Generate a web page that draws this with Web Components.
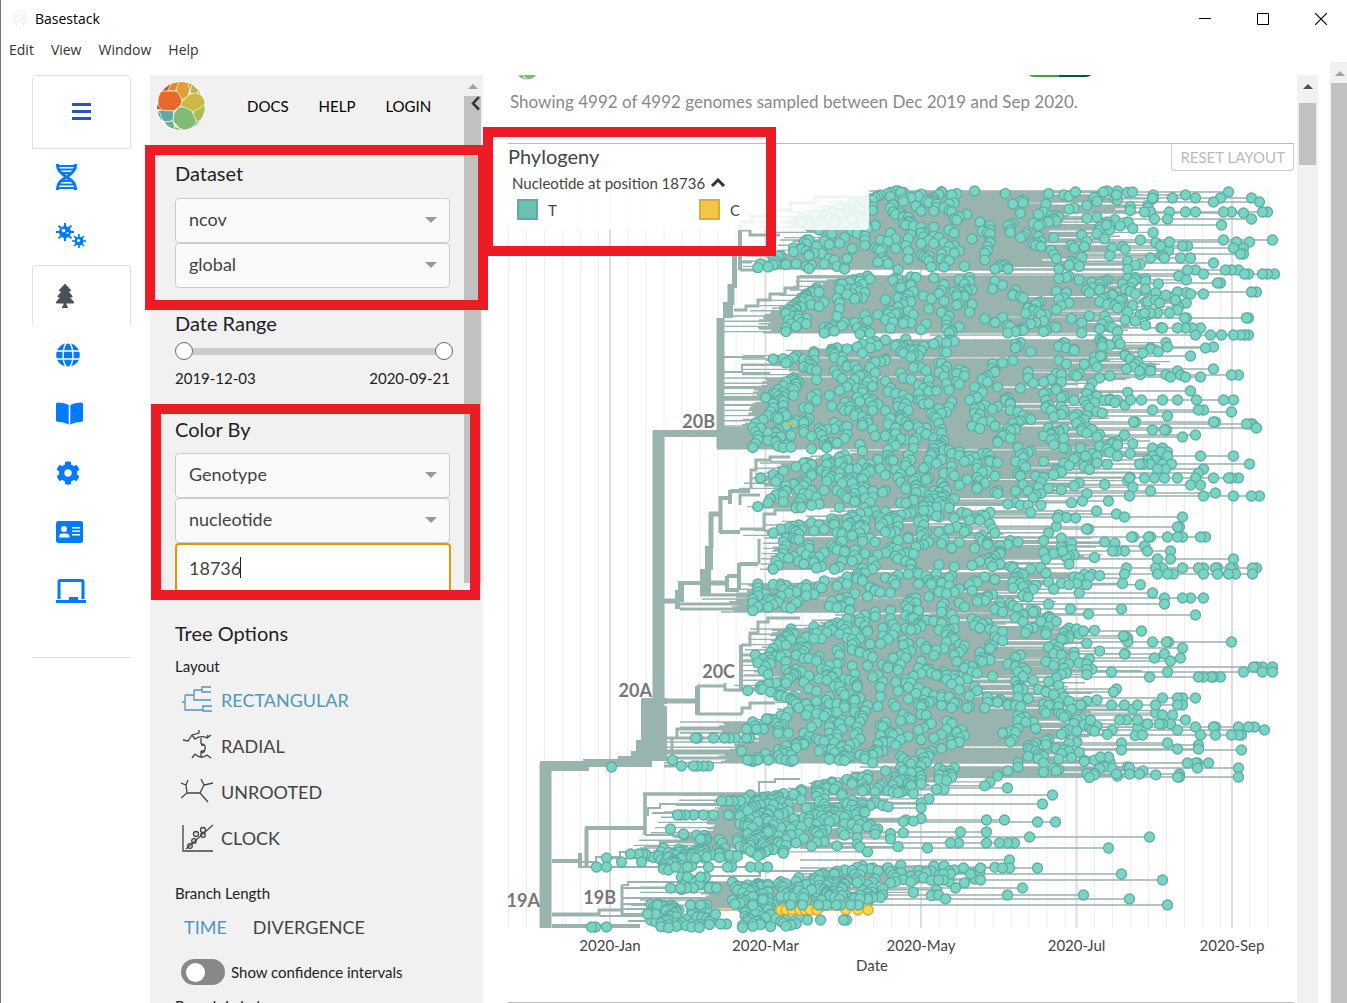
<!DOCTYPE html>
<html lang="en">
<head>
<meta charset="utf-8">
<title>Basestack</title>
<style>
html,body{margin:0;height:100%;overflow:hidden;background:#fff;font-family:Lato,"Liberation Sans",sans-serif;color:#333}
</style>
</head>
<body>
<basestack-app></basestack-app>
<script>
const define = (name, html, setup) => {
  const tpl = document.createElement('template');
  tpl.innerHTML = '<style>*{box-sizing:border-box}button,input,select{font:inherit;color:inherit;margin:0}button{background:none;border:0;padding:0;text-align:left}</style>' + html;
  customElements.define(name, class extends HTMLElement {
    constructor() {
      super();
      this.attachShadow({mode: 'open'}).append(tpl.content.cloneNode(true));
    }
    connectedCallback() { if (setup) setup(this, this.shadowRoot); }
  });
};

/* Window chrome */
define('window-bar', `
<style>
:host{display:flex;align-items:center;height:37px;padding:0 14px 0 11px;font:14px "Open Sans","Noto Sans",sans-serif;color:#000}
svg{display:block}
.name{flex:1;padding-left:7px}
button{width:24px;height:24px;display:grid;place-items:center}
.controls{display:flex;gap:34px}
</style>
<svg width="16" height="18" viewBox="0 0 16 18" fill="none" stroke="#d4d4d4" stroke-dasharray="1 2"><circle cx="8" cy="7" r="6"/><circle cx="8" cy="7" r="3"/><path d="M3 12l2 4M13 12l-2 4M7 17h3"/></svg>
<span class="name">Basestack</span>
<div class="controls">
<button aria-label="Minimize"><svg width="12" height="12"><path d="M0 5.500h12" stroke="#000"/></svg></button>
<button aria-label="Maximize"><svg width="12" height="12"><path d="M.5.500h11v11H.5z" fill="none" stroke="#000"/></svg></button>
<button aria-label="Close"><svg width="12" height="12"><path d="M0 0l12 12M12 0L0 12" stroke="#000" stroke-width="1.200"/></svg></button>
</div>`);

define('menu-bar', `
<style>
:host{display:flex;align-items:center;gap:17px;height:25px;padding:0 8px;font:14px "Open Sans","Noto Sans",sans-serif;color:#333}
</style>
<button>Edit</button><button>View</button><button>Window</button><button>Help</button>`);

/* Left rail */
define('nav-rail', `
<style>
:host{display:block;width:99px}
nav{display:flex;flex-direction:column;height:583px;border-bottom:1px solid #dee2e6}
a{display:flex;align-items:center;height:59px;padding-left:24px;color:#007bff}
a.menu{height:74px;justify-content:center;padding:0;border:1px solid #dee2e6;border-radius:4px 4px 0 0;color:#2b55bd}
a.on{height:60px;padding-left:23px;border:1px solid #dee2e6;border-bottom:0;border-radius:4px 4px 0 0;color:#495057}
svg{display:block;fill:currentColor}
</style>
<nav aria-label="Sections">
<a class="menu" href="#" aria-label="Menu"><svg width="19" height="18" viewBox="0 0 19 18"><path d="M0 0h19v3H0zM0 7h19v3H0zM0 14h19v3H0z"/></svg></a>
<a href="#" aria-label="Sequences" style="margin-top:-2px"><svg width="21" height="26" viewBox="0 0 21 26" fill="none" stroke="currentColor" style="fill:none"><path d="M1.500 0v1.500c0 5 3.500 8 9 11.500s9 6 9 11.500V26M19.500 0v1.500c0 5-3.500 8-9 11.500s-9 6-9 11.500V26" stroke-width="3"/><path d="M2 2h17M2 5.500h17M5 9h11M5 17h11M2 20.500h17M2 24h17" stroke-width="2"/></svg></a>
<a href="#" aria-label="Variants"><svg width="30" height="25" viewBox="0 0 30 25"><g stroke="currentColor"><circle cx="9" cy="9" r="5.500"/><path d="M9 0v18M0 9h18M2.600 2.600l12.800 12.800M15.400 2.600L2.600 15.400" stroke-width="2"/><circle cx="23" cy="18" r="4"/><path d="M23 11v14M16 18h14M18 13l10 10M28 13L18 23" stroke-width="1.600"/></g><g fill="#fff"><circle cx="7.500" cy="7.500" r="1.800"/><circle cx="11.500" cy="10" r="1"/><circle cx="22.500" cy="17.500" r="1.500"/></g></svg></a>
<a class="on" href="#" aria-label="Tree" aria-current="page"><svg width="18" height="24" viewBox="0 0 384 512"><path d="M378.310 378.490L298.420 288h30.630c9.010 0 16.980-5 20.780-13.060 3.800-8.040 2.550-17.260-3.280-24.050L268.420 160h28.890c9.100 0 17.300-5.350 20.860-13.610 3.520-8.130 1.860-17.590-4.240-24.080L203.660 4.830c-6.030-6.450-17.280-6.450-23.320 0L70.060 122.310c-6.100 6.490-7.750 15.950-4.240 24.080C69.380 154.650 77.590 160 86.690 160h28.890l-78.140 90.910c-5.810 6.780-7.060 15.990-3.270 24.040C37.970 283 45.930 288 54.950 288h30.630L5.690 378.490c-6 6.790-7.360 16.090-3.560 24.260 3.750 8.050 12 13.250 21.010 13.250H160v24.450l-30.290 48.400c-5.320 10.640 2.420 23.160 14.310 23.160h95.960c11.890 0 19.630-12.520 14.310-23.160L224 440.450V416h136.860c9.010 0 17.260-5.200 21.010-13.250 3.800-8.170 2.440-17.470-3.560-24.260z"/></svg></a>
<a href="#" aria-label="Map"><svg width="24" height="24" viewBox="0 0 24 24"><circle cx="12" cy="12" r="11.800"/><g fill="none" stroke="#fff" stroke-width="1.400"><ellipse cx="12" cy="12" rx="5" ry="12.500"/><path d="M0 8h24M0 16h24"/></g></svg></a>
<a href="#" aria-label="Docs"><svg width="27" height="23" viewBox="0 0 27 23"><path d="M0 2Q0 .5 1.500.500 8.500.500 12.700 3v19.500Q8 20 1.300 19.700 0 19.700 0 18.300zM27 2Q27 .5 25.500.500 18.500.500 14.300 3v19.500Q19 20 25.700 19.700 27 19.700 27 18.300z"/></svg></a>
<a href="#" aria-label="Settings"><svg width="24" height="24" viewBox="0 0 512 512"><path d="M487.400 315.700l-42.600-24.600c4.300-23.200 4.300-47 0-70.200l42.600-24.600c4.900-2.800 7.100-8.600 5.500-14-11.100-35.600-30-67.800-54.700-94.600-3.800-4.100-10-5.100-14.800-2.300L380.800 110c-17.900-15.400-38.500-27.300-60.800-35.100V25.800c0-5.600-3.900-10.500-9.400-11.700-36.700-8.200-74.300-7.800-109.200 0-5.500 1.200-9.400 6.100-9.400 11.700V75c-22.200 7.900-42.800 19.800-60.800 35.100L88.700 85.500c-4.900-2.800-11-1.900-14.800 2.300-24.700 26.700-43.600 58.900-54.700 94.600-1.700 5.400.6 11.200 5.500 14L67.300 221c-4.300 23.200-4.300 47 0 70.200l-42.600 24.600c-4.900 2.800-7.100 8.600-5.500 14 11.100 35.600 30 67.800 54.700 94.600 3.800 4.100 10 5.100 14.800 2.300l42.600-24.600c17.900 15.400 38.500 27.300 60.800 35.100v49.200c0 5.600 3.900 10.500 9.400 11.700 36.700 8.200 74.300 7.800 109.200 0 5.500-1.200 9.400-6.100 9.400-11.700v-49.200c22.200-7.900 42.800-19.800 60.800-35.100l42.600 24.600c4.900 2.800 11 1.900 14.800-2.300 24.700-26.700 43.600-58.900 54.700-94.600 1.500-5.500-.7-11.300-5.600-14.100zM256 336c-44.100 0-80-35.900-80-80s35.900-80 80-80 80 35.900 80 80-35.900 80-80 80z"/></svg></a>
<a href="#" aria-label="Account"><svg width="27" height="22" viewBox="0 0 27 22"><rect width="27" height="22" rx="2.500"/><g fill="#fff"><circle cx="8" cy="8" r="3"/><path d="M3 16.500q0-4 3-4h4.500q3 0 3 4zM16 6h8v1.500h-8zM16 9.500h8v1.500h-8zM16 13h8v1.500h-8z"/></g></svg></a>
<a href="#" aria-label="Workspace"><svg width="30" height="24" viewBox="0 0 30 24"><path d="M1.500 20V2.500Q1.500 0 4 0h22q2.500 0 2.500 2.500V20h-3V3h-21v17zM0 21h13v-3h9v3h8v3H0z"/></svg></a>
</nav>`);

/* Cell-like round brand mark */
define('brand-mark', `
<style>:host{display:block;width:50px;height:50px}svg{display:block;width:100%;height:100%}</style>
<svg viewBox="0 0 50 50"><defs><clipPath id="c"><circle cx="25" cy="25" r="24"/></clipPath></defs>
<circle cx="25" cy="25" r="25" fill="#fff"/>
<g clip-path="url(#c)" stroke="#f6f3e2" stroke-width=".8">
<path fill="#dd4826" d="M0 10L8 3 18 0 14 9 6 12 0 18z"/><path fill="#e68532" d="M12 9L17 0 24 0 21 8 18 11z"/><path fill="#e39e35" d="M24-1h7l3 8-2 8-6 4-5-8-1-3z"/>
<path fill="#e9692c" d="M2 14q1-4 5-4h11q4 0 5 3l3 6-1 5-7 6H6q-4 0-4-5z"/><path fill="#dca238" d="M31-1l7 4v7l-3 3z"/><path fill="#b4bb48" d="M36 3l8 7-1 5-9-3z"/><path fill="#98c15c" d="M42 9l8 12-3 2-6-9z"/>
<path fill="#cdb941" d="M26 20l7-6q6-4 12 0l4 6-1 6-10 5-9-2-4-4z"/><path fill="#a8c052" d="M38 30l11-6 1 10-8 8-6-7z"/>
<path fill="#60a9a0" d="M2 30l4-1 12 1-1 10-8 1-6-5z"/><path fill="#db3527" d="M0 22l5 6-5 1z"/><path fill="#4f95b5" d="M0 29l4 3 3 10-7-2z"/>
<path fill="#81b976" d="M18 32l5-6 5 0 8 4 5 12-3 7-6 2-9-4-6-7z"/><path fill="#6bb190" d="M8 41l9-1 2 7-5 2z"/><path fill="#98c15c" d="M16 50l3-5 8 5z"/><path fill="#65ad9a" d="M36 46l5-5 5-3-2 8-9 5z"/></g></svg>`);

/* Scrollbar picture: arrow + thumb */
define('scroll-track', `
<style>
:host{display:flex;flex-direction:column;align-items:center;background:#f1f1f1;width:21px;--arrow:#505050}
i{flex:none;width:0;height:0;border:5px solid transparent;border-top:0;border-bottom-color:var(--arrow);margin:9px 0 14px}
b{flex:none;width:17px;background:#c1c1c1;height:var(--thumb,62px)}
:host([dim]){--arrow:#a3a3a3}
:host([dim]) i{margin:9px 0 7px}
</style><i></i><b></b>`);

define('select-box', `
<style>
:host{display:block;position:relative}
select{display:block;width:100%;height:45px;padding:0 13px 4px;border:1px solid #ccc;border-radius:4px;background:#fafafa;appearance:none;font-size:18px;color:#444}
i{position:absolute;right:13px;top:19px;border:6px solid transparent;border-top-color:#999;border-bottom:0;pointer-events:none}
</style><select></select><i></i>`, (host, root) => {
  const s = root.querySelector('select');
  s.setAttribute('aria-label', host.getAttribute('label'));
  s.innerHTML = '<option>' + host.getAttribute('value') + '</option>';
});

define('date-slider', `
<style>
:host{display:grid;height:20px;width:278px;align-items:center}
:host>*{grid-area:1/1}
i{height:7px;background:#ccc;margin:0 9px}
input{appearance:none;background:none;width:100%;height:18px;pointer-events:none}
input::-webkit-slider-thumb{appearance:none;width:18px;height:18px;border-radius:9px;background:#fff;border:1px solid #666;pointer-events:auto}
</style><i></i><input type="range" aria-label="Start date" value="0"><input type="range" aria-label="End date" value="100">`);

define('layout-option', `
<style>
:host{display:block;height:46px;color:#444}
:host([active]){color:#5097ba}
button{display:flex;align-items:center;gap:8px;width:100%;height:46px;padding-left:6px;font-size:18px}
::slotted(svg){display:block;width:32px;height:32px;fill:none;stroke:currentColor;stroke-width:1.300}
</style><button><slot></slot></button>`);

define('control-panel', `
<style>
:host{display:block;width:333px;background:#f1f1f1;color:#222;position:relative}
.upper{display:flex;height:515px;overflow:hidden}
.controls{flex:1;padding:0 14px 0 25px;overflow:hidden}
header{display:flex;align-items:center;margin-left:-19px;height:62px;font-size:15px;color:#000}
header a{color:inherit;text-decoration:none;margin-left:30px}
header brand-mark{margin-right:11px}
h2{margin:0;font-size:20px;font-weight:400;line-height:24px}
h3{margin:0;font-size:15px;font-weight:400;line-height:20px}
.dataset{padding:24px 0 23px}
.dataset h2{margin-bottom:13px}
.color h2{margin-bottom:12px}
.dates{display:flex;justify-content:space-between;font-size:15px;line-height:20px;margin-top:7px}
date-slider{margin-top:6px}
.color{padding-top:29px}
.color input{display:block;width:276px;height:50px;padding:0 12px 1px;border:2px solid #e09a00;border-radius:4px 4px 0 0;background:#fff;font-size:18px;color:#444;outline:0}
.field{position:relative}
.field i{position:absolute;left:65px;top:14px;width:1px;height:21px;background:#222}
scroll-track{width:17px;margin-right:2px;height:508px;--thumb:487px}
.collapse{position:absolute;right:3px;top:20px;width:10px;height:16px}
.collapse svg{display:block}
.lower{padding:31px 25px 0}
.lower h3{margin-top:11px}
.opts{margin:1px 0 22px}
.length{display:flex;gap:26px;padding-left:9px;margin-top:12px;font-size:18px;line-height:24px;color:#444}
.length .on{color:#5097ba}
.toggle{display:flex;align-items:center;gap:6px;margin:20px 0 6px 6px;font-size:15px}
.toggle input{appearance:none;width:44px;height:26px;border-radius:13px;background:#888}
.toggle input::before{content:"";display:block;width:19px;height:19px;border-radius:50%;background:#fff;margin:4px 5px}
</style>
<div class="upper"><div class="controls">
<header><brand-mark></brand-mark><a href="#">DOCS</a><a href="#">HELP</a><a href="#">LOGIN</a></header>
<section class="dataset"><h2>Dataset</h2><select-box label="Dataset" value="ncov"></select-box><select-box label="Region" value="global"></select-box></section>
<section><h2>Date Range</h2><date-slider></date-slider><div class="dates"><span>2019-12-03</span><span>2020-09-21</span></div></section>
<section class="color"><h2>Color By</h2><select-box label="Color by" value="Genotype"></select-box><select-box label="Sequence type" value="nucleotide"></select-box>
<div class="field"><input type="text" aria-label="Position" value="18736"><i></i></div></section>
</div><scroll-track dim></scroll-track></div>
<button class="collapse" aria-label="Collapse sidebar"><svg width="10" height="16" viewBox="0 0 10 16"><path d="M9 2L3 8.500l6 6" fill="none" stroke="#333" stroke-width="2.500"/></svg></button>
<div class="lower"><h2>Tree Options</h2><h3>Layout</h3>
<div class="opts">
<layout-option active><svg viewBox="0 0 32 32"><path d="M1 18h3M4 11v15h18M4 11h9M13 6v10h17M13 6h8M30 3h-9v5h9M31 22h-9v5h9"/></svg>RECTANGULAR</layout-option>
<layout-option><svg viewBox="0 0 32 32"><path d="M18 -1v4l-7 2-4 6-5-1M11 5l3 4q6-4 12-1l1-3M26 8l4-3M20 8v6M20 14q5 0 4 5t-4 3v5M20 15h3M20 21h3M11 28l3-4M14 24q6 6 12 1l4 3"/></svg>RADIAL</layout-option>
<layout-option><svg viewBox="0 0 32 32"><path d="M0 7l5 2M7 4L5 9l1 8-6 5M6 17h13l8 9M19 17l4-8 9-2M23 9l-3-6"/></svg>UNROOTED</layout-option>
<layout-option><svg viewBox="0 0 32 32"><path d="M2 3v26h30M5 27L32 3"/><circle cx="9" cy="24" r="2.300"/><circle cx="13" cy="19" r="2.300"/><circle cx="15" cy="12" r="2.500"/><circle cx="22" cy="13" r="2.300"/><circle cx="22" cy="8" r="2.500"/></svg>CLOCK</layout-option>
</div>
<h3>Branch Length</h3>
<div class="length"><button class="on">TIME</button><button>DIVERGENCE</button></div>
<label class="toggle"><input type="checkbox" role="switch"><span>Show confidence intervals</span></label>
<h3>Branch Labels</h3>
</div>`);

/* Phylogeny drawing */
define('phylo-tree', `
<style>
:host{display:block}
svg{display:block;width:100%;height:auto;overflow:visible;font-family:Lato,sans-serif}
.axis{font-size:15px;fill:#444;text-anchor:middle}
.clade{font-size:18px;font-weight:700;fill:#777;text-anchor:end}
</style>
<svg viewBox="508 172 786 821" role="img" aria-label="Phylogeny"></svg>`, (host, root) => {
  let seed = 7919;
  const rnd = () => (seed = (seed * 16807) % 2147483647) / 2147483647;
  const GREY = '#99b3ae';
  let grid = '', wide = '', lines = '', dots = '', top = '';
  [508.5, 526.5, 544.5, 562.5, 580.5, 598.5].forEach(x => grid += `M${x} 190V928`);
  const months = [[610, '2020-Jan'], [765.5, '2020-Mar'], [921, '2020-May'], [1076.5, '2020-Jul'], [1232, '2020-Sep']];
  let labels = '';
  months.forEach(([x, t], i) => {
    wide += `M${x} 190V928`;
    for (let k = 1; k < (i === 4 ? 3 : 9); k++) grid += `M${x + 18 * k} 190V928`;
    labels += `<text class="axis" x="${x}" y="951">${t}</text>`;
  });
  const day = x => 508 + Math.round((x - 508) / 2.55) * 2.55;
  const circle = (x, y) => `<circle cx="${x.toFixed(1)}" cy="${y.toFixed(1)}" r="5"/>`;
  const dot = (x, y) => circle(day(x), y);
  /* clade bands: y0 y1 | stem x | first tip x | solid until | furthest | random tips per row */
  const bands = [
    [191,222,868,748,892,785,1110,1160,2.4],[222,240,746,790,795,850,1110,1160,2.2],[240,256,780,775,805,780,1100,1190,2.2],[256,270,745,742,775,748,1090,1180,2.4],
    [276,290,800,790,865,805,1140,1200,2.4],[290,316,790,740,810,775,1130,1190,2.4],[316,334,724,724,785,785,1100,1190,2.4],
    [340,358,870,724,880,775,1130,1170,2.4],[359,377,742,742,765,840,1130,1190,2.5],[378,401,724,724,790,757,1090,1130,2.2],
    [400,429,724,724,775,750,1090,1130,3],[428,449,717,717,755,752,1110,1160,2.8],[451,463,850,758,860,800,1110,1170,2.6],
    [463,479,760,752,800,757,1100,1170,2.8],[478,492,750,735,757,800,1060,1170,2.8],[491,508,800,742,780,755,1030,1090,3],
    [511,525,830,766,870,800,1000,1080,2.8],[525,536,764,742,790,757,980,1090,2.8],[538,570,764,760,785,770,1040,1130,2.6],
    [573,585,850,780,860,800,1100,1150,2.6],[584,597,740,702,755,750,1040,1080,2.6],[599,612,702,682,750,752,1010,1060,3],
    [615,630,835,768,860,800,1050,1090,2.8],[629,656,750,744,785,765,1090,1140,3],[655,676,742,742,755,760,1080,1150,3],
    [675,691,744,728,790,745,1050,1100,2.8],[692,705,800,750,770,795,1050,1100,2.6],[704,723,790,742,800,760,1080,1170,2.6],
    [722,733,680,680,750,752,1090,1180,2.6],[733,743,680,672,800,805,1070,1150,2.6],[742,763,664,664,790,745,1060,1120,2.8],
    [767,778,860,840,900,850,1130,1160,2.4],[778,795,830,762,850,775,930,1000,3.200],[795,813,682,672,745,735,880,930,3.600],
    [812,835,664,650,740,740,870,930,3.200],[835,849,645,630,680,750,850,900,3],[848,862,640,600,660,655,745,880,2.4],
    [866,884,850,770,860,765,960,1000,3],[882,900,640,640,730,745,880,960,3],[900,909,640,625,730,740,850,870,3]
  ];
  for (const [y0, y1, s0, s1, d0, d1, solid, far, per] of bands) {
    const f = (d0 + d1) / 2, main = y0 < 770;
    const walkers = [];
    for (let x = f + 20; x < solid + (main ? 30 : 0); x += (x > 960 ? 30 : 46) + rnd() * 26) walkers.push([x, x]);
    for (let y = y0, n = 0; y <= y1; y += 1.300, n++) {
      const t = (y - y0) / (y1 - y0), stem = s0 + (s1 - s0) * t, first = d0 + (d1 - d0) * t;
      const r0 = rnd();
      const end = r0 < .22 ? solid - 110 + rnd() * 80 : r0 < .65 ? solid - 30 + rnd() * 40 : solid + rnd() * (far - solid);
      const from = n % 4 === 0 ? stem : stem + (first - stem) * .55 + rnd() * 14;
      lines += `M${from.toFixed(0)} ${y.toFixed(1)}H${end.toFixed(0)}`;
      if (rnd() < .75) dots += dot(end, y);
      if (n % 3 === 0) dots += dot(first + rnd() * 8, y);
      walkers.forEach(w => {
        w[0] += (rnd() - .5) * 18 + (w[1] - w[0]) * .04;
        if (rnd() < .06) w[0] += (rnd() - .5) * 50;
        const x = Math.max(first + 4, w[0]);
        if (x <= end && rnd() < (x < 960 ? .42 : .46)) dots += dot(x, y);
      });
      const count = Math.floor(per * .7 + rnd());
      const span = Math.min(end, 960) - first - 12;
      for (let i = 0; i < count; i++) dots += dot(first + 12 + span * Math.pow(rnd(), 1.200), y + rnd() * 2 - 1);
    }
  }
  /* dense early clusters near the root */
  const cluster = (x0, x1, y0, y1, n) => { for (let i = 0; i < n; i++) dots += dot(x0 + rnd() * (x1 - x0), y0 + (y1 - y0) * (i + rnd()) / n); };
  cluster(744, 775, 798, 856, 60); cluster(660, 695, 850, 870, 34); cluster(650, 712, 904, 928, 70); cluster(742, 772, 884, 928, 55);
  cluster(675, 715, 876, 890, 10); cluster(735, 765, 886, 906, 20); cluster(690, 740, 850, 858, 16); cluster(775, 800, 916, 927, 10);
  cluster(776, 868, 892, 902, 30); cluster(798, 860, 880, 900, 40);
  /* long late branches: y, tips */
  const rows = [
    [192,1228,1132,1103,1075],[195,1185,1116],[198,1251,1195,1172,1220,1152],[202,1259,1213],[212,1267,1262,1231,1223,1195,1185,1169,1150,1144],[213,1243],[219,1251,1167,1154],[225,1221,1106],
    [240,1272,1223],[242,1249,1236,1169],[246,1187,1182,1160],[248,1233,1243],[254,1243,1240],[258,1190,1180,1164,1150],[263,1213],[270,1238,1231,1225,1187,1195],[274,1274,1267,1262,1248,1244,1203],[283,1220,1217],[292,1256,1251,1177],[294,1203,1190],[300,1175,1155],[303,1159],[310,1177],[313,1169,1157,1150,1144],[318,1248,1246,1186,1184],[328,1200,1192,1185,1177,1162],[335,1248,1244,1240,1233,1221,1210,1195],
    [347,1213,1167],[348,1205],[356,1190,1100],[369,1213,1126],[371,1177,1150,1139],[375,1238,1231,1180],[377,1200,1185,1170],[391,1190],[400,1233,1223,1196,1177,1162,1141,1130],[410,1203,1198,1152],[412,1231],[416,1167],[422,1215,1213,1135,1133],[424,1252,1246,1250],[428,1256],[430,1166,1164,1152],[435,1195,1124],[437,1182],
    [448,1152,1162,1080,1063],[452,1167,1160],[456,1233,1200,1167,1152,1085],[460,1155,1147],[464,1249,1171,1162,1150,1142,1139],[469,1203,1165,1157],[473,1198],[478,1238,1231,1228,1213,1195,1177,1164,1154,1144,1129],[485,1200,1190],[493,1215],[496,1259,1251,1233,1203,1129],[501,1108,1082],[511,1096],[514,1116],[517,1182,1124],[518,1075,1057],[527,1179,1177],[529,1088,1086],[537,1205,1200,1182,1177,1167,1150,1148,1133,1131],[546,1144],[551,1170,1147,1124,1116,1112,1062],[559,1233,1170,1157],[568,1256,1252,1233,1230,1217,1215,1203,1198,1182,1162,1155,1126],[574,1252,1235,1228,1217,1203,1173,1167,1157,1124],
    [593,1152],[598,1203,1190,1182,1164],[604,1164],[609,1121,1070],[614,1088],[615,1195],[631,1141,1083],[636,1125,1123],[642,1231,1168,1166,1152],[648,1182],[654,1164,1124],[658,1180,1154],[661,1170],[667,1272,1262,1256,1253],[672,1272,1262,1243,1167,1111],[677,1220,1213,1211,1203,1198,1149],[689,1116],[692,1113],[698,1195,1182,1177,1162],[705,1182,1177,1155,1137,1124,1111,1080],[715,1172,1162],[720,1185,1137,1126,1119,1090],[724,1170,1162,1159,1147],[727,1254,1248,1238,1215,1213,1195],[730,1264,1177],[735,1241,1238,1231,1215,1200,1142],[743,1167,1121],[745,1198],[749,1198,1177],[750,1241,1121],[757,1108,1100],[763,1208,1197,1195,1187],[768,1238,1197,1129],[774,1179,1129,1139,1116],[777,1238,1179,1177],
    [788,1007],[795,1052],[804,1042],[820,1004,986],[822,1055,1037],[832,986,960],[837,1149,1029],[843,1014,1007,999,986,958,950],[848,1108,927],[860,1009],[868,1037,1009,1002,980,963],[874,1121,970,950,943],[880,1162,980,943,938],[888,1022,955],[895,1083,1007,938],[899,1129,945],[905,1167],
    [719,768,766],[738,749,746,735,729,724,713,697,695],[729,763,756,746],[751,741],[760,793,768,757,750,747,672],[766,708,703,697,693,681],[801,733,728,721,740],[815,730,728,713,703,693,685,680,677],[829,670],[834,683],[839,705,702,700],[858,695,606],[854,645,638,642,630],[862,641,621],[867,767,758,750,731,727,708,687,675,606,596],[877,705,700,687],[888,716,693,686,680,670],[905,657,690,700],[914,647,655,715],[920,846,843,820,807],[924,726,720],[927,606,595,591],[767,611],
    [905,858,850,840,836,826,818,802,790]
  ];
  for (const [y, ...xs] of rows) {
    const far = Math.max(...xs);
    if (far > 960) lines += `M${y > 785 ? 800 : 930} ${y}H${far}`;
    xs.sort((a, b) => b - a).forEach(x => top += circle(x + .5, y));
  }
  const strokes = [
    [12, 'M545.500 764V928'], [4, 'M552 861H582M580 853V868'], [4, 'M586.500 828V868M585 828H645'], [3.500, 'M645 793V835M643 794H761'], [2, 'M759 794V782H775V779H800M645 835H675M648 816V808H660V804H760M652 813H700'],
    [4, 'M552 914.500H600M552 926H640'], [3, 'M599 916V910H622M622 885V915'], [2, 'M622 885H628V882H690V876H760V871H850M622 888H700M622 898H720M622 904H660M622 909H660M622 914H650M600 916H650M628 921H660M582 867H760M582 862H596V857H620V852H645V846H660V842H720'],
    [7, 'M653 433.500H722'], [12, 'M658.500 431V761'], [5, 'M664 701H699M697.500 686V715'], [3, 'M697 686H725M697 714H742M725 683V690H745M742 714V708H750V703H775M664 738H677M677 738V729H755M672 738V750M664 751H745M664 758H760M664 753H740M664 766H710M677 738H730'],
    [8, 'M720.500 318V448'], [10, 'M728 302V318'], [7, 'M731 284V305'], [5, 'M734.500 256V288'], [4, 'M740 225V270'], [3, 'M734 310H746V306H758V300H770V294H785V288H798V277H870M740 270H760M740 262H752M740 230H750V235H780M740 222H752V216H775V210H790V203H815V197H850'],
    [2, 'M722 357H765M742 373V365H790M742 373H770M722 372H742M722 387H760M722 397H760M722 405H760'],
    [5, 'M664 601H675M677.500 590V609'], [6, 'M681 581V602'], [4, 'M681 583H702'], [11, 'M705.500 569V596'], [8, 'M709 546V570'], [5, 'M711 513V548M709 514H720M709 583H727'], [4, 'M720.500 496V533M720 532H740M720 498H732M730 490V504M730 491H750M739 563V590M739 564H758M727 576V590H739M727 576H739'], [3, 'M759 539V564M740 529H764V514H775V510H800M751 488V470H756V460H770V457H790M740 505V495H760M680 604H750M680 609H750M700 595H745'],
    [4, 'M741 645V690'], [3, 'M741 645H750V633H758V622H768V618H800M741 655H780M741 661H775']
  ];
  const solidShapes = 'M540 761H583V759H618V756H631V751H636V740H641V699Q641 698 643 698H667V704H664V761H652V767H589V771H540zM653 706H667V761H653zM717 427H760V448H717z';
  root.querySelector('svg').innerHTML =
    `<path d="${grid}" stroke="#eee" stroke-width="1"/><path d="${wide}" stroke="#ddd" stroke-width="2"/>` +
    `<g fill="none" stroke="${GREY}"><path d="${lines}" stroke-width="1.400"/>` +
    strokes.map(([w, d]) => `<path d="${d}" stroke-width="${w}"/>`).join('') + '</g>' +
    `<path d="${solidShapes}" fill="${GREY}"/><path d="M695 910H868" stroke="#d9aa62" stroke-width="1.500"/>` +
    `<g fill="#78d5c5" stroke="#62ada1" stroke-width="1.300">${dots}</g>` +
    `<g fill="#ffd54a" stroke="#dda82e" stroke-width="1.300">${[781,786,792,800,805,810,817,846,858,868].map(x => `<circle cx="${x}" cy="910" r="5"/>`).join('')}</g>` +
    `<g fill="#78d5c5" stroke="#62ada1" stroke-width="1.300">${top}</g>` +
    '<path d="M786 425l3.500-4 3.500 4z" fill="#eab62f"/>' + labels +
    '<text class="axis" x="872" y="971">Date</text>' +
    '<text class="clade" x="715" y="428">20B</text><text class="clade" x="735" y="678">20C</text><text class="clade" x="652" y="697">20A</text><text class="clade" x="616" y="904">19B</text><text class="clade" x="540" y="907">19A</text>';
});

define('tree-legend', `
<style>
:host{display:block;width:361px;font-size:15px;color:#444}
.title{display:flex;align-items:center;gap:5px;height:18px;padding-left:4px;line-height:18px;margin-top:2px}
.title button{width:16px;height:12px}
.title svg{display:block}
.keys{display:grid;grid-template-columns:182px 1fr;background:rgba(255,255,255,.85);border-radius:0 0 4px 4px;height:40px;padding:9px 9px 0;margin-top:-2px}
.key{display:flex;align-items:center;gap:10px;height:21px}
i{width:21px;height:21px;background:#6dbfb2;border:2px solid #5fab9f}
.c i{background:#f5c548;border-color:#dcab3c}
</style>
<div class="title"><span>Nucleotide at position 18736</span><button aria-label="Collapse legend"><svg width="16" height="12" viewBox="0 0 16 12"><path d="M2 9l6-6 6 6" fill="none" stroke="#333" stroke-width="3"/></svg></button></div>
<div class="keys"><div class="key"><i></i>T</div><div class="key c"><i></i>C</div></div>`);

define('phylo-view', `
<style>
:host{display:block;flex:1;min-width:0;padding:0 3px 0 25px;overflow:hidden}
.top{display:flex;justify-content:space-between;height:5px;overflow:hidden;padding:0 200px 0 6px;align-items:flex-end}
.top brand-mark{width:26px;height:26px}
.pill{width:68px;height:27px;border-radius:8px;background:linear-gradient(90deg,#43a047 48%,#00564a 48%);margin-bottom:3px}
p{margin:0;padding:9px 2px 0;height:63px;font-size:17px;line-height:26px;color:#888}
.card{border-top:1px solid #bbb}
.head{display:flex;justify-content:space-between;align-items:flex-start;height:28px}
h2{margin:0;font-size:20px;font-weight:400;line-height:25px;color:#444}
.reset{height:27px;padding:0 8px;border:1px solid #ccc;border-top:0;border-radius:0 0 4px 4px;font-size:15px;color:#bbb}
.stage{position:relative}
tree-legend{position:absolute;left:0;top:0}
.next{margin-top:9px}
</style>
<div class="top"><brand-mark></brand-mark><span class="pill"></span></div>
<p>Showing 4992 of 4992 genomes sampled between Dec 2019 and Sep 2020.</p>
<section class="card"><div class="head"><h2>Phylogeny</h2><button class="reset">RESET LAYOUT</button></div>
<div class="stage"><phylo-tree></phylo-tree><tree-legend></tree-legend></div></section>
<section class="card next"></section>`);

define('basestack-app', `
<style>
:host{display:flex;flex-direction:column;height:100vh;box-sizing:border-box;position:relative;overflow:hidden;border-left:1px solid #777}
.body{display:flex;flex:1;min-height:0}
.content{display:flex;flex:1;min-width:0;padding:13px 12px 0 31px}
nav-rail{margin-right:19px}
.outer{width:17px;padding-left:2px;--thumb:925px}
.mark{position:absolute;border:10px solid #ed1c24;pointer-events:none}
.m1{left:144px;top:145px;width:343px;height:165px}
.m2{left:482px;top:127px;width:293px;height:129px}
.m3{left:150px;top:404px;width:329px;height:196px}
</style>
<window-bar></window-bar><menu-bar></menu-bar>
<div class="body"><div class="content"><nav-rail></nav-rail><control-panel></control-panel><phylo-view></phylo-view><scroll-track></scroll-track></div><scroll-track class="outer" dim></scroll-track></div>
<div class="mark m1"></div><div class="mark m2"></div><div class="mark m3"></div>`);
</script>
</body>
</html>
